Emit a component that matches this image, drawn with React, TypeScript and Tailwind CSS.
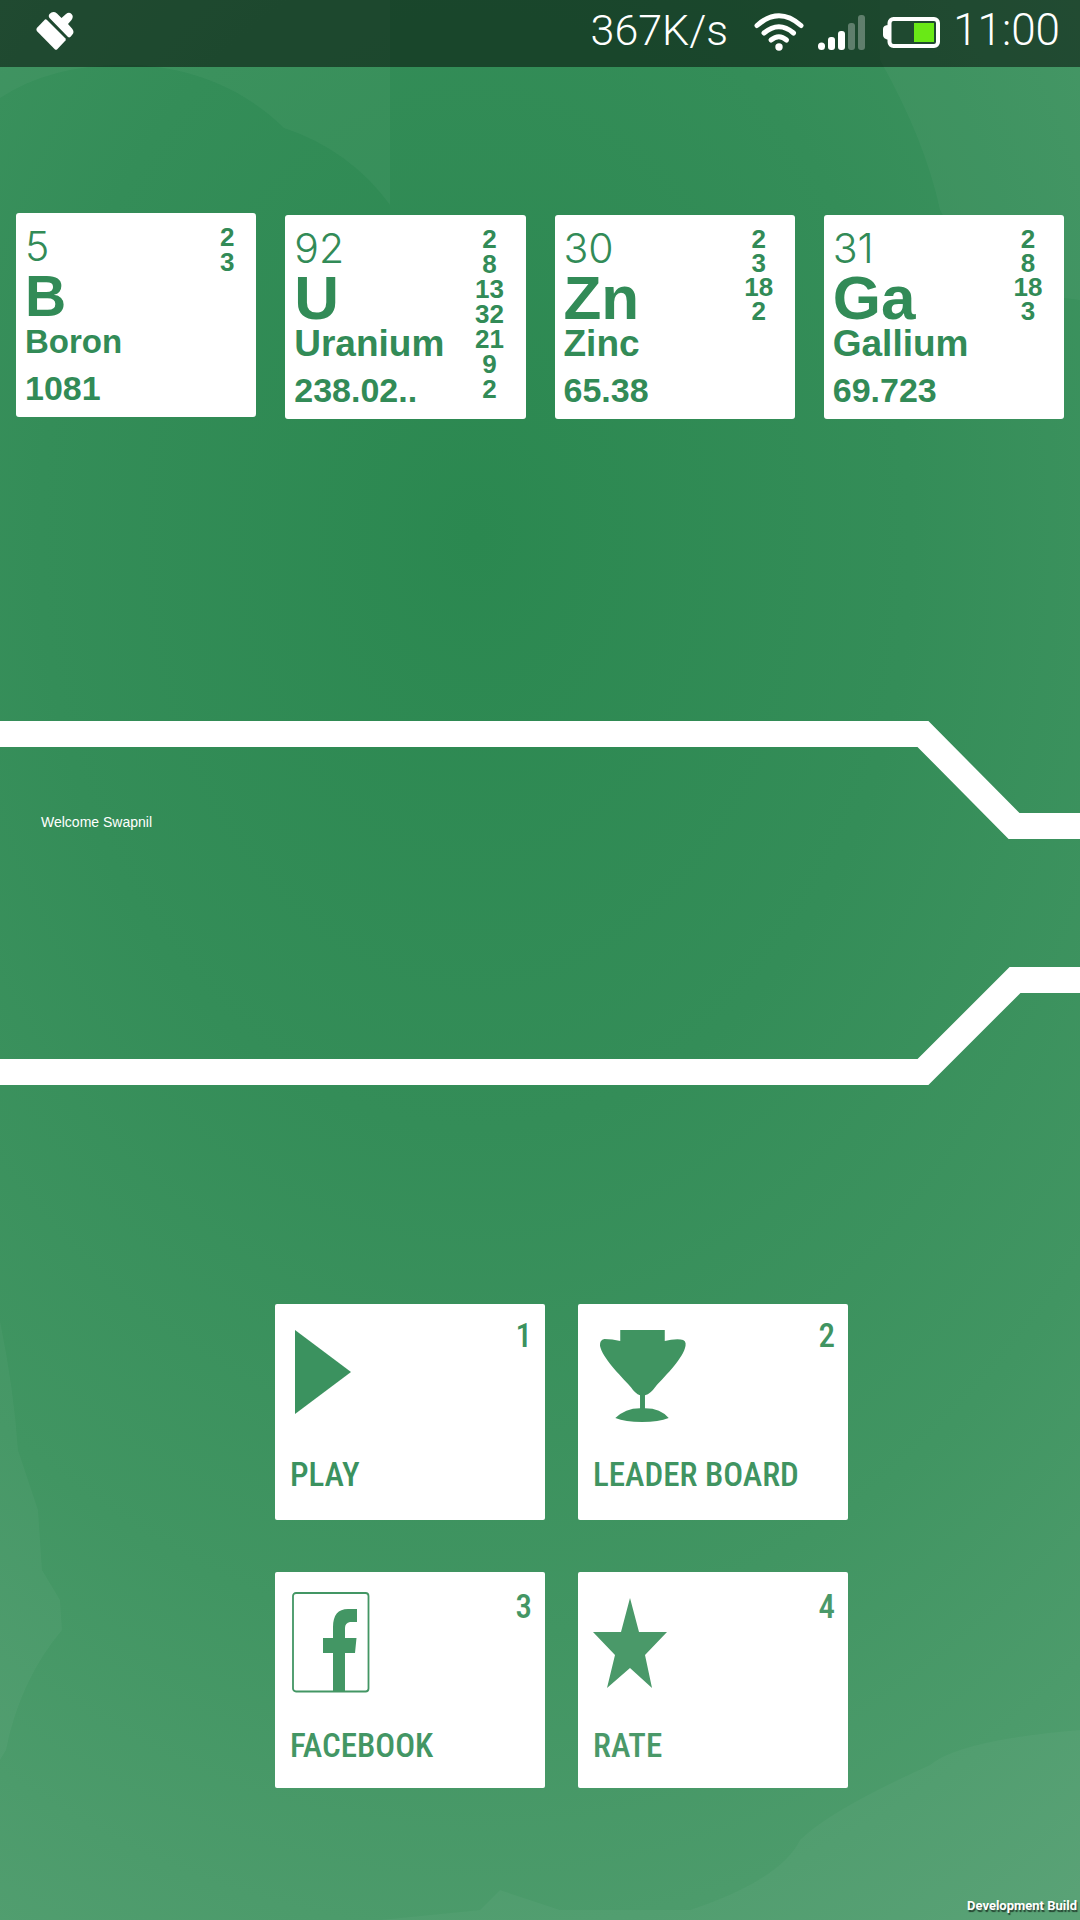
import React from "react";

type Element = {
  number: string;
  symbol: string;
  name: string;
  mass: string;
  shells: string[];
  shellLeading: string;
  compact?: boolean;
};

const elements: Element[] = [
  { number: "5", symbol: "B", name: "Boron", mass: "1081", shells: ["2", "3"], shellLeading: "leading-[25px]", compact: true },
  { number: "92", symbol: "U", name: "Uranium", mass: "238.02..", shells: ["2", "8", "13", "32", "21", "9", "2"], shellLeading: "leading-[25px]" },
  { number: "30", symbol: "Zn", name: "Zinc", mass: "65.38", shells: ["2", "3", "18", "2"], shellLeading: "leading-[24px]" },
  { number: "31", symbol: "Ga", name: "Gallium", mass: "69.723", shells: ["2", "8", "18", "3"], shellLeading: "leading-[24px]" },
];

function ElementCard({ el }: { el: Element }) {
  return (
    <article
      className={
        "flex h-[204px] min-w-0 justify-between rounded-[3px] bg-white pl-[9px] font-['Liberation_Sans',Arial,sans-serif] font-bold text-[#328b57] " +
        (el.compact ? "pr-[13px]" : "mt-[2px] pr-[20px]")
      }
    >
      <div className="flex flex-col pt-[13px]">
        <p className="h-[40px] font-['Inter',sans-serif] text-[41px] leading-[40px] font-light">{el.number}</p>
        <h2 className={el.compact ? "h-[60px] text-[57px] leading-[60px]" : "h-[60px] text-[62px] leading-[60px]"}>{el.symbol}</h2>
        <p className={el.compact ? "h-[31px] text-[33px] leading-[31px]" : "h-[31px] text-[37px] leading-[31px]"}>{el.name}</p>
        <p className="mt-[15px] text-[34px] leading-[32px]">{el.mass}</p>
      </div>
      <ul className={"w-[32px] pt-[12px] text-center text-[26px] " + el.shellLeading}>
        {el.shells.map((s, i) => (
          <li key={i}>{s}</li>
        ))}
      </ul>
    </article>
  );
}

const PlayIcon = () => (
  <svg className="mt-[26px] ml-[5px] h-[84px] w-[56px]" viewBox="0 0 56 84" fill="currentColor" aria-hidden="true">
    <path d="M0 0 56 42 0 84Z" />
  </svg>
);

const TrophyIcon = () => (
  <svg className="mt-[26px] ml-[6px] h-[92px] w-[88px]" viewBox="0 0 88 93" fill="currentColor" aria-hidden="true">
    <path d="M21 0H66V11Q74 9 82 9.500Q88 10 87 16C85 28 68 45 56 58Q52 64 46 66V79Q62 79 70 89Q60 93 43 93Q26 93 16 89Q26 79 41 79V66Q36 64 32 58C20 45 3 28 .5 16Q0 10 5 9Q13 9 21 11Z" />
  </svg>
);

const FacebookIcon = () => (
  <svg className="mt-[20px] ml-[2px] h-[101px] w-[78px]" viewBox="0 0 78 101" fill="currentColor" aria-hidden="true">
    <rect x="1" y="1" width="75.500" height="98.500" rx="3" fill="none" stroke="currentColor" strokeWidth="1.800" />
    <path d="M41 99V61H31V46H41V35C41 23 46 17 56 17H65V30H58Q53 31 53 36V46H64.500L63 61H53V99Z" />
  </svg>
);

const StarIcon = () => (
  <svg className="mt-[26px] h-[90px] w-[74px]" viewBox="0 0 74 90" fill="currentColor" aria-hidden="true">
    <path d="M37 0 46 34H74L52 57 59 90 37 70 14 90 22 57 0 34H28Z" />
  </svg>
);

const tiles = [
  { id: "1", label: "PLAY", icon: <PlayIcon />, color: "text-[#3b925f]", pad: "pb-[27px]", idPad: "pt-[14px]" },
  { id: "2", label: "LEADER BOARD", icon: <TrophyIcon />, color: "text-[#409461]", pad: "pb-[27px]", idPad: "pt-[14px]" },
  { id: "3", label: "FACEBOOK", icon: <FacebookIcon />, color: "text-[#439664]", pad: "pb-[24px]", idPad: "pt-[17px]" },
  { id: "4", label: "RATE", icon: <StarIcon />, color: "text-[#4a9969]", pad: "pb-[24px]", idPad: "pt-[17px]" },
];

function StatusBar() {
  return (
    <header className="relative flex h-[67px] items-center justify-between bg-black/50 pr-[20px] pl-[36px] font-['Roboto',sans-serif] text-[44px] leading-[52px] font-light text-white">
      <svg className="mb-[6px] h-[38px] w-[38px]" viewBox="0 0 38 38" fill="currentColor" aria-hidden="true">
        <path d="M9 7.500Q10 7 11 8L29.500 26.500Q30 27.500 29.500 28.500L21 37.500Q20 38 19 37.500L.8 19Q0 17.500 .8 16Z" />
        <path d="M13.500 6Q12 4 13.500 2Q17-1.500 21 1.500L25.500 6 30 2Q33-.5 35.500 2Q38 4.500 35.500 8L32 12 36 16.500Q39 20 36 23Q34 26.500 32 25Z" />
      </svg>
      <div className="flex items-center">
        <span className="mb-[7px] text-[43px]">367K/s</span>
        <svg className="mb-[4px] ml-[26px] h-[38px] w-[50px]" viewBox="0 0 50 38" fill="none" stroke="currentColor" strokeWidth="5" strokeLinecap="round" aria-hidden="true">
          <path d="M3 12.500Q25-7 47 12.500" />
          <path d="M10 20Q25 7.500 39.500 20" />
          <path d="M17 27Q25 20.500 32.500 27" />
          <circle cx="25" cy="34" r="3.700" fill="currentColor" stroke="none" />
        </svg>
        <svg className="mb-[3px] ml-[14px] h-[35px] w-[47px]" viewBox="0 0 47 35" fill="currentColor" aria-hidden="true">
          <rect x="0" y="27.500" width="7" height="7.500" rx="3.500" />
          <rect x="10" y="22" width="7" height="13" rx="3" />
          <rect x="20" y="16" width="7" height="19" rx="3" />
          <rect x="30" y="8" width="7" height="27" rx="3" opacity=".3" />
          <rect x="40" y="0" width="7" height="35" rx="3" opacity=".3" />
        </svg>
        <svg className="mb-[2px] ml-[18px] h-[31px] w-[57px]" viewBox="0 0 57 31" fill="none" aria-hidden="true">
          <path d="M6 8Q0 8 0 12V18Q0 22 6 23Z" fill="currentColor" />
          <rect x="6.500" y="2" width="48.500" height="27" rx="4" stroke="currentColor" strokeWidth="4" />
          <rect x="31" y="6" width="20" height="19" fill="#69e916" />
        </svg>
        <span className="mb-[7px] ml-[13px]">11:00</span>
      </div>
    </header>
  );
}

export default function App() {
  return (
    <div className="relative flex min-h-screen flex-col overflow-hidden bg-[#328c57] bg-[radial-gradient(ellipse_115%_88%_at_44%_28%,#2b8850_0%,#348d58_35%,#419562_65%,#57a174_100%)]">
      <svg className="absolute inset-0 h-full w-full" viewBox="0 0 1080 1920" preserveAspectRatio="none" fill="#fff" fillOpacity=".035" aria-hidden="true">
        <path d="M0 0H390V205Q350 150 284 128C230 75 165 65 125 65Q50 65 0 98Z" />
        <path d="M880 0H1080V300Q980 290 940 210Q925 140 880 60Z" />
        <path d="M0 1321Q14 1390 18 1450L38 1510 42 1570 60 1600 62 1630Q20 1680 6 1750L0 1760Z" />
        <path d="M1080 1730Q960 1740 930 1765Q830 1810 800 1840Q780 1880 690 1910L560 1910 500 1890 480 1910 380 1920H1080Z" />
      </svg>

      <StatusBar />

      <main className="relative flex grow flex-col">
        <section className="mt-[146px] grid grid-cols-4 gap-[29px] px-4" aria-label="Elements">
          {elements.map((el) => (
            <ElementCard key={el.name} el={el} />
          ))}
        </section>

        <section className="relative mt-[302px] h-[364px]">
          <svg className="absolute inset-0 h-full w-full" viewBox="0 0 1080 364" preserveAspectRatio="xMaxYMid slice" fill="none" stroke="#fff" strokeWidth="26" aria-hidden="true">
            <path d="M-20 13H923L1014 105H1100" />
            <path d="M-20 351H923L1015 259H1100" />
          </svg>
          <p className="relative pt-[92px] pl-[41px] font-['Liberation_Sans',Arial,sans-serif] text-[14px] leading-[18px] text-white">Welcome Swapnil</p>
        </section>

        <nav className="mt-[219px] flex justify-center pb-[132px] pl-[43px]" aria-label="Main menu">
          <div className="grid grid-cols-2 gap-x-[33px] gap-y-[52px]">
            {tiles.map((t) => (
              <button
                key={t.id}
                type="button"
                className={
                  "flex h-[216px] w-[270px] flex-col items-start justify-between rounded-[2px] bg-white pr-[13px] pl-[15px] text-left font-['Roboto_Condensed','Roboto',sans-serif] text-[33px] leading-[36px] font-medium " +
                  t.pad +
                  " " +
                  t.color
                }
              >
                <span className="flex w-full justify-between">
                  {t.icon}
                  <span className={t.idPad}>{t.id}</span>
                </span>
                <span className="whitespace-nowrap">{t.label}</span>
              </button>
            ))}
          </div>
        </nav>
      </main>

      <footer className="absolute right-[3px] bottom-[5px] font-['Roboto',sans-serif] text-[13px] leading-[18px] font-bold text-white [text-shadow:1px_2px_1px_rgba(0,0,0,0.6)]">Development Build</footer>
    </div>
  );
}
